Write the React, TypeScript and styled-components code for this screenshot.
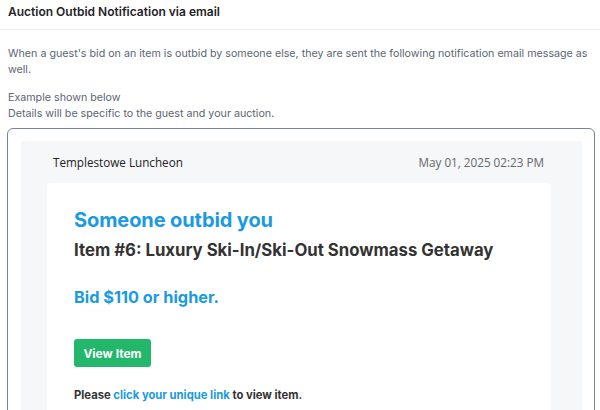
import React from 'react';
import styled, { createGlobalStyle } from 'styled-components';

const GlobalStyle = createGlobalStyle`
  body {
    margin: 0;
    background: #ffffff;
    font-family: Inter, "Liberation Sans", sans-serif;
  }
`;

const Page = styled.div`
  width: 600px;
  height: 410px;
  overflow: hidden;
`;

const Header = styled.div`
  height: 22px;
  padding: 0 8px 7px;
  display: flex;
  align-items: center;
  border-bottom: 1px solid #eceef1;
  font-size: 12px;
  font-weight: 600;
  color: #1f2328;
`;

const Body = styled.div`
  padding: 16px 5px 0 7px;
`;

const Text = styled.p<{ $gap?: number }>`
  margin: 0 0 ${({ $gap }) => $gap ?? 0}px 1px;
  font-size: 10.7px;
  line-height: 16px;
  color: #5b6573;
`;

const Frame = styled.div`
  border: 1.5px solid #7486a0;
  border-radius: 6px;
  padding: 12px 12px 0 13px;
  height: 300px;
`;

const EmailBg = styled.div`
  background: #f6f7f9;
  height: 100%;
  padding: 0 31px 0 26px;
`;

const MetaRow = styled.div`
  height: 42px;
  display: flex;
  align-items: center;
  justify-content: space-between;
  padding: 0 7px 0 6px;
  font-family: "Open Sans", "Noto Sans", sans-serif;
  font-size: 11.7px;
`;

const Org = styled.span`
  color: #222;
`;

const Stamp = styled.span`
  color: #666;
`;

const Card = styled.div`
  background: #fff;
  border-radius: 4px;
  padding: 24px 27px;
  height: 100%;
`;

const Title = styled.div`
  font-size: 20px;
  line-height: 26px;
  font-weight: 700;
  color: #1a9ae0;
  letter-spacing: -0.1px;
`;

const ItemName = styled.div`
  font-size: 16.75px;
  line-height: 22px;
  font-weight: 700;
  color: #333;
  margin-top: 6px;
`;

const BidLine = styled.div`
  font-size: 16.3px;
  line-height: 22px;
  font-weight: 700;
  color: #1a9ae0;
  margin-top: 25px;
`;

const ViewButton = styled.button`
  margin-top: 31px;
  width: 77px;
  height: 28px;
  border: none;
  border-radius: 3px;
  background: #22b76b;
  color: #fff;
  font-family: Inter, "Liberation Sans", sans-serif;
  font-size: 12px;
  font-weight: 700;
  padding: 0;
`;

const Note = styled.div`
  margin-top: 20px;
  font-size: 11.25px;
  line-height: 16px;
  font-weight: 700;
  color: #333;
`;

const Link = styled.a`
  color: #1a9ae0;
  text-decoration: none;
`;

export default function App() {
  return (
    <Page>
      <GlobalStyle />
      <Header>Auction Outbid Notification via email</Header>
      <Body>
        <Text $gap={12}>
          When a guest's bid on an item is outbid by someone else, they are sent the following notification email message as well.
        </Text>
        <Text>Example shown below</Text>
        <Text $gap={6}>Details will be specific to the guest and your auction.</Text>
        <Frame>
          <EmailBg>
            <MetaRow>
              <Org>Templestowe Luncheon</Org>
              <Stamp>May 01, 2025 02:23 PM</Stamp>
            </MetaRow>
            <Card>
              <Title>Someone outbid you</Title>
              <ItemName>Item #6: Luxury Ski-In/Ski-Out Snowmass Getaway</ItemName>
              <BidLine>Bid $110 or higher.</BidLine>
              <ViewButton>View Item</ViewButton>
              <Note>
                Please <Link href="#">click your unique link</Link> to view item.
              </Note>
            </Card>
          </EmailBg>
        </Frame>
      </Body>
    </Page>
  );
}
